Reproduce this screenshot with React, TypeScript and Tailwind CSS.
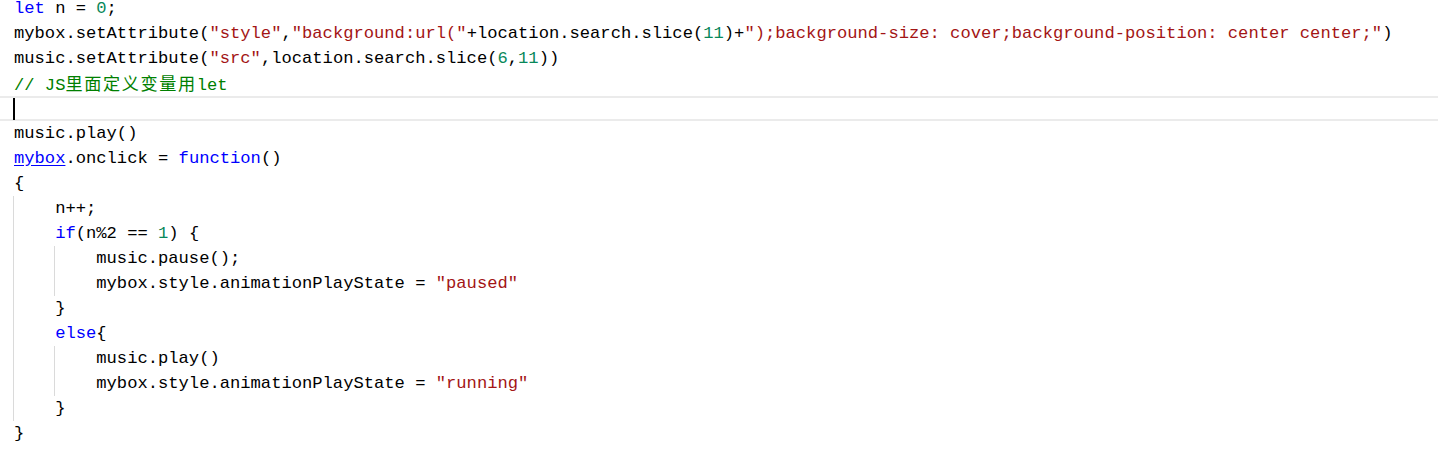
type Tok = [string, string?];

const K = "text-[#0000ff]";
const S = "text-[#a31515]";
const N = "text-[#09885a]";
const C = "text-[#008000]";

type Line = { guides?: number; toks: Tok[]; cursor?: boolean };

const lines: Line[] = [
  { toks: [["let", K], [" n = "], ["0", N], [";"]] },
  {
    toks: [
      ["mybox.setAttribute("],
      ['"style"', S],
      [","],
      ['"background:url("', S],
      ["+location.search.slice("],
      ["11", N],
      [")+"],
      ['");background-size: cover;background-position: center center;"', S],
      [")"],
    ],
  },
  {
    toks: [
      ["music.setAttribute("],
      ['"src"', S],
      [",location.search.slice("],
      ["6", N],
      [","],
      ["11", N],
      ["))"],
    ],
  },
  { toks: [["// JS", C], ["里面定义变量用", C + " cjk"], ["let", C]] },
  { toks: [], cursor: true },
  { toks: [["music.play()"]] },
  { toks: [["mybox", K + " underline underline-offset-2"], [".onclick = "], ["function", K], ["()"]] },
  { toks: [["{"]] },
  { guides: 1, toks: [["n++;"]] },
  { guides: 1, toks: [["if", K], ["(n%2 == "], ["1", N], [") {"]] },
  { guides: 2, toks: [["music.pause();"]] },
  { guides: 2, toks: [["mybox.style.animationPlayState = "], ['"paused"', S]] },
  { guides: 1, toks: [["}"]] },
  { guides: 1, toks: [["else", K], ["{"]] },
  { guides: 2, toks: [["music.play()"]] },
  { guides: 2, toks: [["mybox.style.animationPlayState = "], ['"running"', S]] },
  { guides: 1, toks: [["}"]] },
  { toks: [["}"]] },
];

function Guide() {
  return <div className="h-full w-[4ch] shrink-0 shadow-[-1px_0_0_#dadada]" />;
}

function CodeLine({ line }: { line: Line }) {
  const g = line.guides ?? 0;
  return (
    <div
      className={
        "flex h-[25px] items-center pl-[14px] " +
        (line.cursor ? "border-y-2 border-[#ebebeb]" : "")
      }
    >
      {g >= 1 && <Guide />}
      {g >= 2 && <Guide />}
      {line.cursor && <div className="h-[22px] w-[2px] -ml-px bg-black" />}
      <div className="whitespace-pre">
        {line.toks.map(([t, cls], i) =>
          cls && cls.includes("cjk") ? (
            <span
              key={i}
              className={cls.replace(" cjk", "") + " font-['Noto_Sans_CJK_SC',sans-serif] tracking-[1.6px]"}
            >
              {t}
            </span>
          ) : (
            <span key={i} className={cls ?? ""}>
              {t}
            </span>
          )
        )}
      </div>
    </div>
  );
}

export default function App() {
  return (
    <div className="h-[449px] w-[1438px] overflow-hidden bg-white">
      <div className="-mt-[4px] font-['Liberation_Mono',monospace] text-[17.15px] leading-[25px] text-black">
        {lines.map((l, i) => (
          <CodeLine key={i} line={l} />
        ))}
      </div>
    </div>
  );
}
